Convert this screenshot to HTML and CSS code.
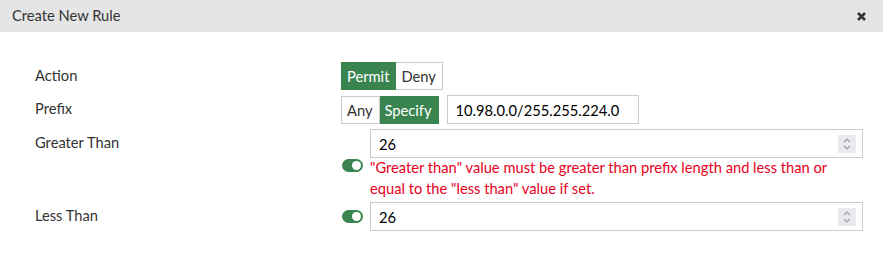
FILE: index.html
```html
<!DOCTYPE html>
<html lang="en">
	<head>
		<meta charset="UTF-8">
		<title>Create New Rule</title>
		<link rel="stylesheet" href="styles.css">
	</head>
	<body>
		<div class="dialog">
			<div class="dialog-head">
				<span class="dialog-title">Create New Rule</span>
				<span class="dialog-close">
					<svg width="9" height="9" viewBox="0 0 9 9"><path d="M1 1L8 8M8 1L1 8" stroke="#333" stroke-width="2.6" stroke-linecap="butt"/></svg>
				</span>
			</div>
			<form class="rule-form" name="ruleForm">
				<!-- Action -->
				<label class="field-label">Action</label>
				<div class="field">
					<div class="toggle-group">
						<span class="tbtn active">Permit</span>
						<span class="tbtn">Deny</span>
					</div>
				</div>

				<!-- Prefix -->
				<label class="field-label">Prefix</label>
				<div class="field">
					<div class="toggle-group">
						<span class="tbtn">Any</span>
						<span class="tbtn active">Specify</span>
					</div>
					<input class="text-input prefix" type="text" value="10.98.0.0/255.255.224.0">
				</div>

				<!-- Greater Than -->
				<label class="field-label low">Greater Than</label>
				<div class="field switch-field">
					<span></span>
					<div class="num-box">
						<span class="num-value">26</span>
						<span class="spinner">
							<svg width="18" height="18" viewBox="0 0 18 18"><path d="M6 7L9 4L12 7M6 11L9 14L12 11" fill="none" stroke="#9a9aa6" stroke-width="1.2"/></svg>
						</span>
					</div>
					<span class="switch on"></span>
					<div class="error-msg">"Greater than" value must be greater than prefix length and less than or equal to the "less than" value if set.</div>
				</div>

				<!-- Less Than -->
				<label class="field-label low">Less Than</label>
				<div class="field switch-field">
					<span class="switch on"></span>
					<div class="num-box">
						<span class="num-value">26</span>
						<span class="spinner">
							<svg width="18" height="18" viewBox="0 0 18 18"><path d="M6 7L9 4L12 7M6 11L9 14L12 11" fill="none" stroke="#9a9aa6" stroke-width="1.2"/></svg>
						</span>
					</div>
				</div>
			</form>
		</div>
	</body>
</html>
```

FILE: styles.css
```css
body {
	margin: 0;
	font-family: Lato, "Open Sans", sans-serif;
	font-size: 14.7px;
	color: #333;
	background: #fff;
}

.dialog-head {
	height: 32px;
	background: #e5e5e5;
	display: flex;
	align-items: center;
	justify-content: space-between;
	padding: 0 17px 0 12px;
}

.dialog-title {
	color: #333;
	margin-top: -2px;
}

.dialog-close {
	display: flex;
	margin-top: 1px;
}

.rule-form {
	display: grid;
	grid-template-columns: 306px 1fr;
	padding: 30px 20px 0 35px;
	row-gap: 5px;
}

.field-label {
	line-height: 27px;
}

.field-label.low {
	line-height: 26px;
}

.field {
	display: flex;
	align-items: center;
}

.toggle-group {
	display: flex;
}

.tbtn {
	display: inline-block;
	height: 28px;
	line-height: 26px;
	padding: 0 6px 0 5px;
	border: 1px solid #ccc;
	box-sizing: border-box;
	background: #fff;
	color: #333;
}

.tbtn + .tbtn {
	border-left: none;
}

.tbtn.active {
	background: #3a8450;
	border-color: #3a8450;
	color: #fff;
}

.text-input {
	font-family: inherit;
	font-size: 14.7px;
	color: #000;
	border: 1px solid #ccc;
	height: 29px;
	box-sizing: border-box;
	padding: 0 8px;
	outline: none;
}

.prefix {
	width: 192px;
	margin-left: 8px;
}

.switch-field {
	display: grid;
	grid-template-columns: 29px 1fr;
	align-items: start;
}

.num-box {
	display: flex;
	align-items: center;
	justify-content: space-between;
	height: 29px;
	box-sizing: border-box;
	border: 1px solid #ccc;
	padding: 0 6px 0 8px;
	color: #000;
}

.spinner {
	display: flex;
	background: #e9e9ee;
}

.switch {
	display: inline-block;
	position: relative;
	width: 21px;
	height: 13px;
	border-radius: 7px;
	background: #3a8450;
	margin-left: 1px;
}

.switch-field > .switch {
	margin-top: 1px;
}

.switch-field > .switch:first-child {
	align-self: center;
	margin-top: 0;
}

.switch.on::after {
	content: "";
	position: absolute;
	right: 2px;
	top: 2px;
	width: 9px;
	height: 9px;
	border-radius: 50%;
	background: #fff;
}

.error-msg {
	color: #e8001c;
	line-height: 21px;
	margin-top: -1px;
	margin-bottom: -2px;
	padding-right: 20px;
}
```
